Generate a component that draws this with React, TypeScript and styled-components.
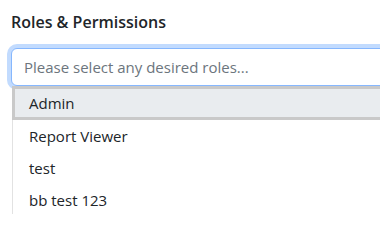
import React from "react";
import styled, { createGlobalStyle } from "styled-components";

const Global = createGlobalStyle`
  html, body { margin: 0; padding: 0; background: #fff; overflow: hidden; }
  body { font-family: "Open Sans", "Noto Sans", sans-serif; color: #212529; }
`;

const Page = styled.div`
  width: 380px;
  height: 214px;
  overflow: clip;
  padding: 11px 0 0 11px;
  box-sizing: border-box;
`;

const Heading = styled.h6`
  margin: 0 0 15px 0;
  font-size: 16px;
  font-weight: 600;
  line-height: 22px;
  color: #212529;
`;

const Field = styled.div`
  width: 420px;
`;

const Input = styled.input`
  display: block;
  box-sizing: border-box;
  width: 100%;
  height: 38px;
  margin: 0;
  padding: 6px 12px;
  font-family: inherit;
  font-size: 15px;
  color: #212529;
  caret-color: #212529;
  background: #fff;
  border: 1px solid #86b7fe;
  border-radius: 6px;
  box-shadow: 0 0 0 4px #c2dbfe;
  outline: none;
  &::placeholder { color: #6c757d; opacity: 1; }
`;

const List = styled.ul`
  list-style: none;
  margin: 0 0 0 1px;
  padding: 0;
  border-left: 1px solid #e2e2e2;
  background: #fff;
`;

const Item = styled.li<{ $active?: boolean }>`
  box-sizing: border-box;
  height: ${(p) => (p.$active ? 34 : 32)}px;
  line-height: ${(p) => (p.$active ? 28 : 32)}px;
  margin-left: ${(p) => (p.$active ? -1 : 0)}px;
  padding-left: ${(p) => (p.$active ? 14 : 16)}px;
  font-size: 15px;
  color: #212529;
  background: ${(p) => (p.$active ? "#e9ecef" : "#fff")};
  border: ${(p) => (p.$active ? "3px solid #c9c9c9" : "none")};
`;

export default function App() {
  return (
    <Page>
      <Global />
      <Heading>Roles &amp; Permissions</Heading>
      <Field>
        <Input autoFocus placeholder="Please select any desired roles..." />
        <List>
          <Item $active>Admin</Item>
          <Item>Report Viewer</Item>
          <Item>test</Item>
          <Item>bb test 123</Item>
        </List>
      </Field>
    </Page>
  );
}
